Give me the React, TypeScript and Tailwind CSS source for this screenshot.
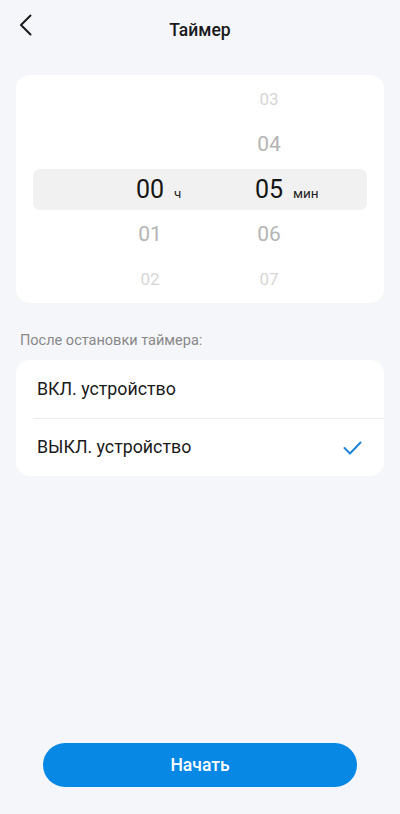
import React from 'react';

const HOURS = [null, null, '00', '01', '02'];
const MINUTES = ['03', '04', '05', '06', '07'];

const rowStyle = (i: number) => {
  if (i === 2) return 'text-[25px] text-[#151515]';
  if (i === 1 || i === 3) return 'text-[21px] text-[#b4b4b4]';
  return 'text-[17px] text-[#d6d6d6]';
};

const App: React.FC = () => {
  return (
    <div className="h-[814px] w-[400px] bg-[#f5f6fa] flex flex-col font-['Roboto',sans-serif]">
      <div className="relative h-[60px] flex items-center justify-center">
        <svg className="absolute left-[18px] top-[14px]" width="16" height="22" viewBox="0 0 16 22" fill="none">
          <path d="M12.5 1.5 L3 11 L12.5 20.5" stroke="#1a1a1a" strokeWidth="2" strokeLinecap="round" strokeLinejoin="round" />
        </svg>
        <h1 className="text-[17.5px] font-medium text-[#1a1a1a]">Таймер</h1>
      </div>

      <div className="mx-4 mt-[15px] bg-white rounded-[14px] pt-[2px] pb-[1px]">
        {MINUTES.map((m, i) => (
          <div key={m} className="h-[45px] flex items-center">
            <div
              className={
                'mx-[17px] flex-1 h-[41px] flex items-center rounded-[7px] ' +
                (i === 2 ? 'bg-[#f1f1f1]' : '')
              }
            >
              <div className="pl-[97px] w-[216px] flex items-baseline">
                <span className={'w-[40px] text-center ' + rowStyle(i)}>{HOURS[i] ?? ''}</span>
                {i === 2 && <span className="ml-[4px] text-[13.5px] text-[#222]">ч</span>}
              </div>
              <div className="flex items-baseline">
                <span className={'w-[40px] text-center ' + rowStyle(i)}>{m}</span>
                {i === 2 && <span className="ml-[4px] text-[13.5px] text-[#222]">мин</span>}
              </div>
            </div>
          </div>
        ))}
      </div>

      <p className="mt-[28px] ml-5 text-[14.5px] leading-5 text-[#888]">После остановки таймера:</p>

      <div className="mx-4 mt-[9px] bg-white rounded-[14px]">
        <div className="h-[58px] flex items-center px-[21px] text-[17.8px] text-[#1a1a1a]">ВКЛ. устройство</div>
        <div className="ml-[17px] h-px bg-[#ececec]" />
        <div className="h-[57px] flex items-center justify-between pl-[21px] pr-[22px] text-[17.8px] text-[#1a1a1a]">
          <span>ВЫКЛ. устройство</span>
          <svg width="19" height="14" viewBox="0 0 19 14" fill="none">
            <path d="M1.5 7 L7 12.5 L17.5 1.5" stroke="#1f84d6" strokeWidth="2" strokeLinecap="round" strokeLinejoin="round" />
          </svg>
        </div>
      </div>

      <div className="flex-1" />

      <div className="px-[43px] pb-[27px]">
        <button className="w-full h-[44px] rounded-full bg-[#0688e4] text-white text-[17.5px] font-medium">
          Начать
        </button>
      </div>
    </div>
  );
};

export default App;
